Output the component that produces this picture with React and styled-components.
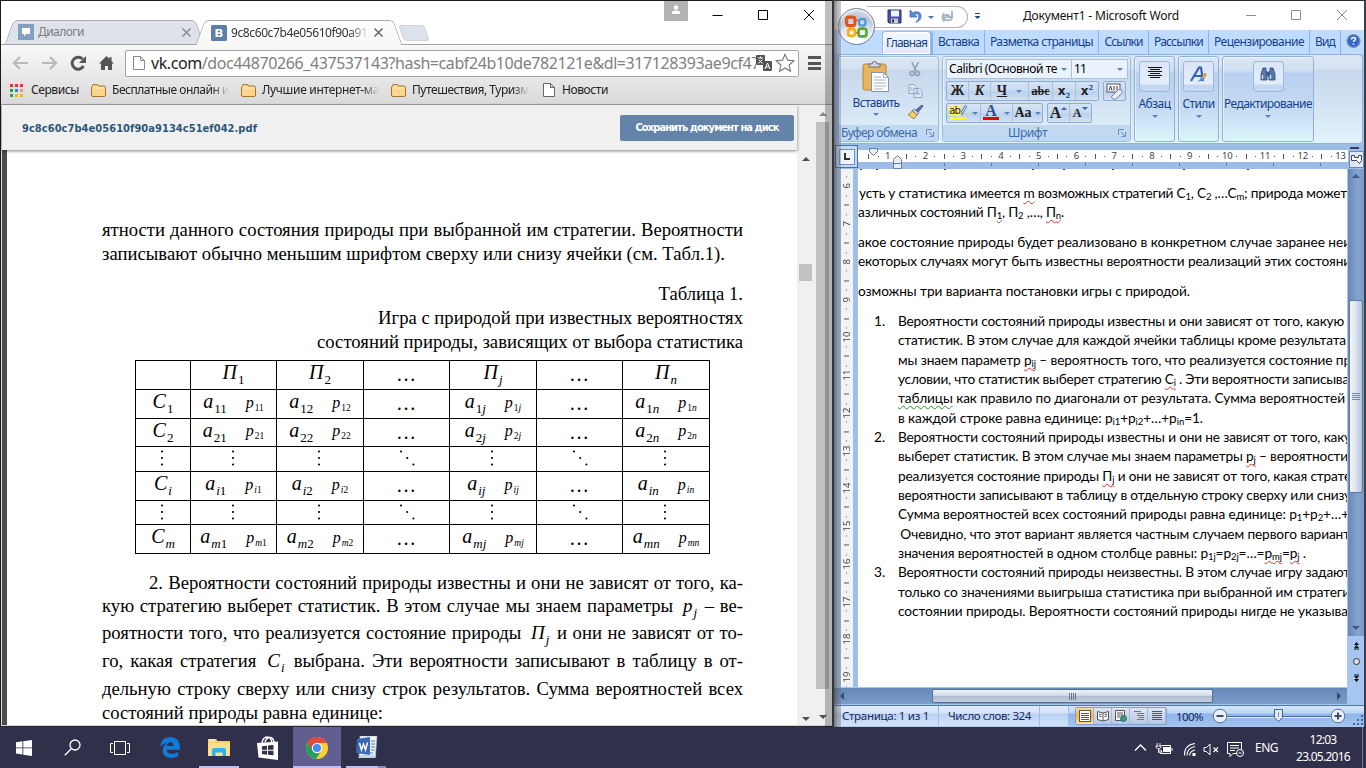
import React, { useLayoutEffect, useRef, useState } from 'react';
import styled, { createGlobalStyle, css } from 'styled-components';

const UI = '"Noto Sans", "Open Sans", sans-serif';

const Global = createGlobalStyle`
  * { box-sizing: border-box; }
  body { margin: 0; background: #31304b; overflow: hidden; }
  svg { display: block; flex: none; }
`;

/* Text spread over a given width by letter spacing */
const FitSpan = styled.span`
  display: inline-block;
  flex: none;
  white-space: pre;
`;
function Fit({ w, children }) {
  const ref = useRef(null);
  const [spacing, setSpacing] = useState(null);
  useLayoutEffect(() => {
    const el = ref.current;
    setSpacing((w - el.getBoundingClientRect().width) / el.textContent.length);
  }, [w]);
  return (
    <FitSpan ref={ref} style={spacing === null ? undefined : { letterSpacing: `${spacing}px` }}>
      {children}
    </FitSpan>
  );
}

const Screen = styled.div`
  width: 1366px;
  height: 768px;
  display: flex;
  flex-direction: column;
  font-family: ${UI};
  overflow: hidden;
`;
const Desktop = styled.div`
  height: 727px;
  display: flex;
  position: relative;
`;
const EdgeShadow = styled.div`
  position: absolute;
  left: 825px;
  top: 0;
  width: 16px;
  height: 727px;
  z-index: 20;
  background: linear-gradient(90deg, rgba(0,0,0,.25) 7px, #333335 7px, #3a3a3c 9px, rgba(60,60,65,.62) 9px, rgba(90,90,95,.4) 13px, rgba(110,110,110,.38) 16px);
`;

/* ---------- browser ---------- */
const Browser = styled.div`
  width: 834px;
  height: 727px;
  border-top: 1px solid #1c1a1e;
  border-left: 1px solid #1c1a1e;
  border-bottom: 1px solid #2a2930;
  background: #fff;
  display: flex;
  flex-direction: column;
  position: relative;
`;
const WinButtons = styled.div`
  position: absolute;
  top: 0;
  left: 663px;
  display: flex;
  align-items: flex-start;
`;
const UserBox = styled.div`
  width: 24px;
  height: 20px;
  background: #b3b3b3;
  display: flex;
  justify-content: center;
  padding-top: 4px;
  margin-right: 20px;
`;
const TabStrip = styled.div`
  height: 43px;
  flex: none;
  display: flex;
  align-items: flex-start;
  padding: 19px 0 0 8px;
`;
const Tab = styled.div`
  width: ${p => p.$w}px;
  height: ${p => (p.$active ? 25 : 24)}px;
  position: relative;
  z-index: ${p => (p.$active ? 2 : 1)};
  display: flex;
  align-items: center;
  padding: 0 5px 0 ${p => (p.$active ? 11 : 9)}px;
  font-size: 12px;
  color: ${p => (p.$active ? '#333' : '#7b7d80')};
  &::before, &::after {
    content: '';
    position: absolute;
    top: 0;
    bottom: 0;
    z-index: -1;
    background: ${p => (p.$active ? 'linear-gradient(#fff,#f7f7f7)' : '#dde3e9')};
    border: 0 solid #a9abad;
    border-top-width: 1px;
  }
  &::before { left: 0; right: 40%; border-left-width: 1px; border-top-left-radius: 5px; transform: skewX(-20deg); }
  &::after { right: 0; left: 40%; border-right-width: 1px; border-top-right-radius: 5px; transform: skewX(20deg); }
  svg { margin-right: 4px; }
`;
const TabText = styled.div`
  width: ${p => p.$w}px;
  overflow: hidden;
  line-height: 18px;
  ${p => p.$fade && css`mask-image: linear-gradient(90deg, #000 82%, transparent 97%);`}
`;
const NewTab = styled.div`
  width: 26px;
  height: 16px;
  margin: 5px 0 0 3px;
  background: #dce2ea;
  border: 1px solid #d0d4d9;
  border-radius: 3px;
  transform: skewX(20deg);
`;
const NavArea = styled.div`
  height: 61px;
  flex: none;
  border-top: 1px solid #a3a3a3;
  border-bottom: 1px solid #a2a2a2;
  background: linear-gradient(#f8f8f8, #dadada);
`;
const NavRow = styled.div`
  height: 33px;
  display: flex;
  align-items: center;
  padding: 3px 0 0 11px;
`;
const NavIcons = styled.div`
  width: 113px;
  display: flex;
  gap: 12px;
`;
const Omnibox = styled.div`
  width: 674px;
  height: 27px;
  border: 1px solid #a6a6a6;
  border-radius: 2px;
  background: #fff;
  display: flex;
  align-items: center;
  padding-left: 7px;
  font-size: 16px;
  color: #808080;
  b { color: #222; font-weight: 400; }
`;
const Url = styled.div`
  width: 605px;
  margin-left: 6px;
  overflow: hidden;
  line-height: 24px;
`;
const OmniIcons = styled.div`
  display: flex;
  align-items: center;
  gap: 3px;
`;
const MenuIcon = styled.div`
  width: 13px;
  height: 14px;
  margin-left: 9px;
  border-top: 3px solid #555;
  border-bottom: 3px solid #555;
  display: flex;
  align-items: center;
  &::after { content: ''; width: 13px; height: 3px; background: #555; }
`;
const Bookmarks = styled.div`
  height: 24px;
  display: flex;
  align-items: center;
  padding: 0 0 0 9px;
  font-size: 12px;
  color: #222;
`;
const Bookmark = styled.div`
  width: ${p => p.$w}px;
  display: flex;
  align-items: center;
  gap: ${p => p.$gap || 6}px;
`;
const BookmarkText = styled.div`
  width: ${p => p.$w || 117}px;
  overflow: hidden;
  line-height: 20px;
  ${p => p.$fade && css`mask-image: linear-gradient(90deg, #000 86%, transparent);`}
`;
const PageRow = styled.div`
  flex: 1;
  display: flex;
  background: #f0f0f0;
  border-bottom: 1px solid #d4d4d4;
  border-left: 1px solid #ddd;
`;
const PageCol = styled.div`
  width: 813px;
  display: flex;
  flex-direction: column;
`;
const FileHeader = styled.div`
  height: 45px;
  width: 795px;
  flex: none;
  position: relative;
  z-index: 1;
  background: #f0f0f0;
  box-shadow: 0 1px 3px rgba(0,0,0,.5);
  display: flex;
  align-items: center;
  justify-content: space-between;
  padding: 1px 3px 0 20px;
  font: bold 11px "DejaVu Sans", sans-serif;
  font-stretch: condensed;
  color: #2b587a;
`;
const SaveButton = styled.div`
  width: 174px;
  height: 26px;
  border-radius: 2px;
  background: #6383a8;
  color: #fff;
  text-align: center;
  line-height: 25px;
`;
const DocRow = styled.div`
  flex: 1;
  display: flex;
`;
const Document = styled.div`
  width: 795px;
  background: #fff;
  border-left: 5px solid #4a4e52;
  padding: 68px 54px 0 95px;
  font: 18.67px "Liberation Serif", serif;
  color: #000;
`;
const SerifLine = styled.div`
  height: 24px;
  line-height: 24px;
  margin-top: ${p => p.$gap || 0}px;
  padding-left: ${p => p.$indent || 0}px;
  text-align: ${p => (p.$right ? 'right' : 'left')};
  white-space: nowrap;
  ${p => p.$full && css`text-align-last: justify; white-space: normal;`}
  & > i { padding: 0 2px 0 4px; }
`;
const MathVar = styled.i`
  font-size: ${p => p.$size || 20}px;
  white-space: nowrap;
  line-height: 0;
  sub {
    font-size: ${p => (p.$size === 16 ? 9.5 : 13)}px;
    vertical-align: ${p => (p.$size === 16 ? -3 : -5)}px;
    line-height: 0;
    margin-left: 1px;
  }
  u { font-style: normal; text-decoration: none; }
`;
const Matrix = styled.div`
  display: grid;
  width: 575px;
  margin: 6px 0 17px 33px;
  grid-template-columns: 56px 86px 87px 86px 87px 86px 87px;
  grid-template-rows: 30px 29px 28px 25px 29px 24px 29px;
`;
const Cell = styled.div`
  border: 0 solid #000;
  border-right-width: 1px;
  border-bottom-width: 1px;
  border-left-width: ${p => (p.$first ? 1 : 0)}px;
  border-top-width: ${p => (p.$top ? 1 : 0)}px;
  display: flex;
  align-items: center;
  justify-content: center;
  gap: 19px;
  padding: ${p => (p.$low ? '2px 0 0' : '0 0 2px')};
`;
const ScrollInner = styled.div`
  width: 18px;
  display: flex;
  flex-direction: column;
  align-items: center;
  padding: 7px 1px 4px 0;
`;
const Thumb = styled.div`
  width: 13px;
  height: ${p => p.$h}px;
  background: #c1c1c1;
  margin: ${p => p.$mt}px 0 auto;
`;
const ScrollOuter = styled.div`
  width: 18px;
  display: flex;
  flex-direction: column;
  padding: 7px 0 6px 1px;
`;
const Arrow = styled.span`
  width: 0;
  height: 0;
  flex: none;
  margin: ${p => p.$m || 0};
  border: ${p => p.$s || 4}px solid transparent;
  ${p => p.$dir === 'up' && css`border-bottom-color: ${p.$c || '#505050'}; border-top-width: 0;`}
  ${p => p.$dir === 'down' && css`border-top-color: ${p.$c || '#505050'}; border-bottom-width: 0;`}
  ${p => p.$dir === 'left' && css`border-right-color: ${p.$c || '#505050'}; border-left-width: 0;`}
  ${p => p.$dir === 'right' && css`border-left-color: ${p.$c || '#505050'}; border-right-width: 0;`}
`;

const FileIcon = ({ c = '#8a8a8a' }) => (
  <svg width="12" height="16" viewBox="0 0 12 16" fill="#fff" stroke={c}>
    <path d="M.5 1.500h7l4 4v9H.5zM7.500 1.500v4h4" />
  </svg>
);
const FolderIcon = () => (
  <svg width="15" height="14" viewBox="0 0 15 14">
    <path d="M1 3.500 2 1.500h4.500l1 1.500H13q1.500 0 1.500 1.500V12q0 1.500-1.500 1.500H2Q.5 13.500.500 12V4z" fill="#fbd58c" stroke="#a5742f" />
    <path d="M2 5h11" stroke="#fff0c8" />
  </svg>
);
const Cross = ({ s = 9, c = '#666', w = 1.6 }) => (
  <svg width={s} height={s} viewBox="0 0 10 10" stroke={c} strokeWidth={w}><path d="M.5.5l9 9M9.500.5l-9 9" /></svg>
);
const AppsIcon = () => {
  const colors = ['#e8382e', '#e8382e', '#e8382e', '#23a455', '#3b7de0', '#f0a31c', '#23a455', '#f7b51c', '#f7b51c'];
  return (
    <svg width="13" height="13" viewBox="0 0 13 13">
      {colors.map((c, i) => <rect key={i} x={(i % 3) * 5} y={Math.floor(i / 3) * 5} width="3" height="3" fill={c} />)}
    </svg>
  );
};
const VDots = ({ diagonal }) => (
  <svg width="16" height="16" viewBox="0 0 16 16" fill="#000">
    {[0, 1, 2].map(i => <circle key={i} cx={diagonal ? 2 + i * 6.2 : 7} cy={1.5 + i * 6.5} r="1.05" />)}
  </svg>
);

const subText = s => s.split('').map((ch, i) => (/\d/.test(ch) ? <u key={i}>{ch}</u> : ch));
const V = ({ n, s, size }) => <MathVar $size={size}>{n}<sub>{subText(s)}</sub></MathVar>;
const cols = ['1', '2', '…', 'j', '…', 'n'];
const rows = ['', '1', '2', '⋮', 'i', '⋮', 'm'];

function GameTable() {
  return (
    <Matrix>
      {rows.map((r, ri) => ['', ...cols].map((c, ci) => {
        let body = null;
        const low = r !== '⋮' && c !== '…';
        if (r === '⋮') body = <VDots diagonal={c === '…'} />;
        else if (c === '…') body = <MathVar>…</MathVar>;
        else if (ri === 0 && ci > 0) body = <V n="П" s={c} />;
        else if (ci === 0 && ri > 0) body = <V n="C" s={r} />;
        else if (ci > 0) body = <><V n="a" s={r + c} /><V n="p" s={r + c} size={16} /></>;
        return <Cell key={`${ri}-${ci}`} $first={ci === 0} $top={ri === 0} $low={low}>{body}</Cell>;
      }))}
    </Matrix>
  );
}

function BrowserWindow() {
  return (
    <Browser>
      <WinButtons>
        <UserBox>
          <svg width="10" height="10" viewBox="0 0 10 10" fill="#fff"><circle cx="5" cy="2.500" r="2.200" /><path d="M1 9V7.500Q1 5.500 5 5.500T9 7.500V9z" /></svg>
        </UserBox>
        <svg width="112" height="24" viewBox="0 0 112 24" fill="none" stroke="#000">
          <path d="M4.500 14.500h10M50.500 9.500h9v9h-9zM96 9l10 10M106 9L96 19" />
        </svg>
      </WinButtons>
      <TabStrip>
        <Tab $w={191}>
          <svg width="16" height="16" viewBox="0 0 16 16"><rect width="16" height="16" fill="#819fc0" /><path d="M4 4h8v6H8l-2 2.500V10H4z" fill="#fff" /></svg>
          <TabText $w={147}><Fit w={46}>Диалоги</Fit></TabText>
          <Cross c="#8a8a8a" />
        </Tab>
        <Tab $active $w={198}>
          <svg width="16" height="16" viewBox="0 0 16 16"><rect width="16" height="16" rx="1.500" fill="#5b7fa8" /><path fillRule="evenodd" fill="#fff" d="M4.500 4H9q2.500.1 2.500 2.200 0 1.200-1 1.700 1.400.4 1.400 1.900Q11.900 12 9.300 12H4.500zM6.800 5.600v1.700h1.600q.9-.1.900-.9t-.9-.8zM6.800 8.700v1.800h1.800q1-.1 1-.9t-1-.9z" /></svg>
          <TabText $w={143} $fade><Fit w={143}>9c8c60c7b4e05610f90a913</Fit></TabText>
          <Cross />
        </Tab>
        <NewTab />
      </TabStrip>
      <NavArea>
        <NavRow>
          <NavIcons>
            <svg width="17" height="16" viewBox="0 0 17 16" fill="none" stroke="#b9b9b9" strokeWidth="2.200"><path d="M8 2L2 8l6 6M2 8h14" /></svg>
            <svg width="17" height="16" viewBox="0 0 17 16" fill="none" stroke="#b9b9b9" strokeWidth="2.200"><path d="M9 2l6 6-6 6M15 8H1" /></svg>
            <svg width="17" height="16" viewBox="0 0 17 16"><path d="M13.500 11A6 6 0 1 1 12.500 4" fill="none" stroke="#555" strokeWidth="3" /><path d="M16 1v7H9z" fill="#555" /></svg>
            <svg width="15" height="16" viewBox="0 0 15 16" fill="#555"><path d="M7.500 1L0 8.500h2V15h4v-4h3v4h4V8.500h2l-2.500-2.500V2h-2v2z" /></svg>
          </NavIcons>
          <Omnibox>
            <FileIcon />
            <Url><Fit w={609}><b>vk.com</b>/doc44870266_437537143?hash=cabf24b10de782121e&amp;dl=317128393ae9cf47</Fit></Url>
            <OmniIcons>
              <svg width="16" height="16" viewBox="0 0 16 16">
                <rect width="9" height="10" rx="1" fill="#555" /><path d="M2 3h5M4.500 1.500V3M3 5l3.500 3.500M6.300 4.500L2.500 8.500" stroke="#fff" fill="none" />
                <rect x="7" y="6" width="9" height="10" rx="1" fill="#555" /><path d="M9 14l2.500-6 2.500 6M10 12h3" stroke="#fff" fill="none" />
              </svg>
              <svg width="20" height="20" viewBox="0 0 18 18" fill="#fff" stroke="#777"><path d="M9 1.200l2.300 5.200 5.700.6-4.300 3.800 1.300 5.700-5-3-5 3 1.300-5.700L1 7l5.700-.6z" /></svg>
            </OmniIcons>
          </Omnibox>
          <MenuIcon />
        </NavRow>
        <Bookmarks>
          <Bookmark $w={81} $gap={8}><AppsIcon /><BookmarkText $w={50}><Fit w={48}>Сервисы</Fit></BookmarkText></Bookmark>
          <Bookmark $w={150}><FolderIcon /><BookmarkText $fade><Fit w={117}>Бесплатные онлайн и</Fit></BookmarkText></Bookmark>
          <Bookmark $w={150}><FolderIcon /><BookmarkText $fade><Fit w={117}>Лучшие интернет-ма</Fit></BookmarkText></Bookmark>
          <Bookmark $w={152}><FolderIcon /><BookmarkText $fade><Fit w={117}>Путешествия, Туризм</Fit></BookmarkText></Bookmark>
          <Bookmark $w={80} $gap={7}><FileIcon c="#666" /><BookmarkText $w={50}><Fit w={46}>Новости</Fit></BookmarkText></Bookmark>
        </Bookmarks>
      </NavArea>
      <PageRow>
        <PageCol>
          <FileHeader>
            <Fit w={235}>9c8c60c7b4e05610f90a9134c51ef042.pdf</Fit>
            <SaveButton><Fit w={143}>Сохранить документ на диск</Fit></SaveButton>
          </FileHeader>
          <DocRow>
            <Document>
              <SerifLine $full>ятности данного состояния природы при выбранной им стратегии. Вероятности</SerifLine>
              <SerifLine><Fit w={623}>записывают обычно меньшим шрифтом сверху или снизу ячейки (см. Табл.1).</Fit></SerifLine>
              <SerifLine $right $gap={16}>Таблица 1.</SerifLine>
              <SerifLine $right><Fit w={365}>Игра с природой при известных вероятностях</Fit></SerifLine>
              <SerifLine $right><Fit w={426}>состояний природы, зависящих от выбора статистика</Fit></SerifLine>
              <GameTable />
              <SerifLine $full $indent={47}>2. Вероятности состояний природы известны и они не зависят от того, ка-</SerifLine>
              <SerifLine $full $gap={-1}>кую стратегию выберет статистик. В этом случае мы знаем параметры <V n="p" s="j" size={19} /> – ве-</SerifLine>
              <SerifLine $full $gap={3}>роятности того, что реализуется состояние природы <V n="П" s="j" size={19} /> и они не зависят от то-</SerifLine>
              <SerifLine $full $gap={4}>го, какая стратегия <V n="C" s="i" size={19} /> выбрана. Эти вероятности записывают в таблицу в от-</SerifLine>
              <SerifLine $full $gap={4}>дельную строку сверху или снизу строк результатов. Сумма вероятностей всех</SerifLine>
              <SerifLine><Fit w={281}>состояний природы равна единице:</Fit></SerifLine>
            </Document>
            <ScrollInner>
              <Arrow $dir="up" />
              <Thumb $h={17} $mt={103} />
              <Arrow $dir="down" />
            </ScrollInner>
          </DocRow>
        </PageCol>
        <ScrollOuter>
          <Arrow $dir="up" $c="#888" $m="0 0 0 3px" />
          <Thumb $h={567} $mt={6} />
          <Arrow $dir="down" $m="0 0 0 3px" />
        </ScrollOuter>
      </PageRow>
    </Browser>
  );
}

/* ---------- word processor ---------- */
const Word = styled.div`
  width: 532px;
  height: 727px;
  position: relative;
  border-top: 1px solid #2a2b2f;
  border-right: 2px solid #35404f;
  background: #a8c6f0;
  display: flex;
  flex-direction: column;
`;
const TitleBar = styled.div`
  height: 29px;
  flex: none;
  background: #fff;
  display: flex;
  align-items: flex-start;
  font-size: 12px;
  color: #111;
`;
const QuickBar = styled.div`
  width: 101px;
  height: 22px;
  margin: 5px 0 0 33px;
  padding-left: 20px;
  border: 1px solid #b5b5b5;
  border-left: 0;
  border-radius: 0 11px 11px 0;
  display: flex;
  align-items: center;
`;
const TitleText = styled.div`
  padding-top: 5px;
  line-height: 19px;
  margin-left: 43px;
  width: 220px;
`;
const Orb = styled.div`
  position: absolute;
  left: 4px;
  top: 7px;
  z-index: 5;
  width: 37px;
  height: 37px;
  border-radius: 50%;
  border: 1px solid #6f7f98;
  background: radial-gradient(circle at 50% 90%, #fff 10%, #dfe5ee 45%, #b9c4d4 65%, #eef1f6 100%);
  box-shadow: inset 0 0 2px 1px #fff;
  display: flex;
  align-items: center;
  justify-content: center;
`;
const RibbonTabs = styled.div`
  height: 24px;
  flex: none;
  background: #bfdbff;
  padding-left: 48px;
  display: flex;
  font-size: 12px;
  color: #15428b;
`;
const RibbonTab = styled.div`
  width: ${p => p.$w}px;
  height: 24px;
  line-height: 24px;
  border-right: 1px solid #8fb2e0;
  text-align: center;
  ${p => p.$active && css`
    height: 23px;
    margin: 1px 2px 0 0;
    line-height: 22px;
    background: linear-gradient(#f3f8fe, #dfe9f6);
    border: 1px solid #96bce8;
    border-bottom: 0;
    border-radius: 4px 4px 0 0;
    box-shadow: inset 0 0 0 1px #fff, 2px 0 0 #8db4e8;
  `}
`;
const Ribbon = styled.div`
  height: 90px;
  flex: none;
  margin: 0 1px 0 3px;
  border: 1px solid #8db2e3;
  border-radius: 4px;
  background: linear-gradient(#dce7f5 0, #d5e2f1 14px, #c7d8ed 15px, #d4e4f4 60%, #e2f3fb);
  box-shadow: 0 1px 0 #93b4d8;
  display: flex;
  gap: 3px;
  padding: 1px 0 0 0;
  color: #15428b;
  font-size: 12px;
`;
const Group = styled.div`
  width: ${p => p.$w}px;
  height: 86px;
  border: 1px solid #9dbfdb;
  border-radius: 3px;
  box-shadow: inset 1px 1px 0 rgba(255,255,255,.5);
  display: flex;
  flex-direction: column;
  ${p => p.$collapsed && css`
    align-items: center;
    padding-top: 4px;
    background: linear-gradient(#dae6f4 0, #cfdff2 14px, #b9d0ef 16px, #c4daf2 60%, #daf5fc);
    border-color: #8fb2d6;
  `}
`;
const GroupFoot = styled.div`
  height: 16px;
  margin-top: auto;
  background: #c1d9f0;
  border-radius: 0 0 3px 3px;
  color: #3e6aaa;
  line-height: 16px;
  display: flex;
  align-items: center;
  justify-content: space-between;
  padding: 0 3px 0 ${p => p.$pl}px;
`;
const IconTile = styled.div`
  width: 31px;
  height: 31px;
  border: 1px solid #9cb9df;
  border-radius: 3px;
  background: linear-gradient(#d9e6f7 0, #e4eefb 22px, #c3d8f0 23px);
  display: flex;
  justify-content: center;
  padding-top: 4px;
  margin-bottom: 3px;
`;
const ClipBody = styled.div`
  display: flex;
  padding: 4px 0 0 5px;
`;
const PasteCol = styled.div`
  width: 64px;
  display: flex;
  flex-direction: column;
  align-items: center;
  line-height: 20px;
`;
const SmallCol = styled.div`
  width: 20px;
  display: flex;
  flex-direction: column;
  align-items: center;
  gap: 6px;
  margin-left: -3px;
`;
const FontBody = styled.div`
  padding: 2px 0 0 3px;
  display: flex;
  flex-direction: column;
  gap: 2px;
`;
const FontRow = styled.div`
  height: 20px;
  display: flex;
  gap: 4px;
`;
const Combo = styled.div`
  width: ${p => p.$w}px;
  height: 20px;
  margin-right: ${p => p.$mr || 0}px;
  background: #eaf2fb;
  border: 1px solid #abc1de;
  color: #000;
  line-height: 18px;
  padding: 0 4px 0 2px;
  display: flex;
  align-items: center;
  justify-content: space-between;
`;
const Segment = styled.div`
  height: 20px;
  border: 1px solid #8fadd3;
  border-radius: 2px;
  background: linear-gradient(#d6e4f5 0, #c7d9ef 9px, #bad0eb 10px, #d0e2f5);
  display: flex;
`;
const Tool = styled.div`
  width: ${p => p.$w}px;
  height: 18px;
  display: flex;
  align-items: center;
  justify-content: center;
  gap: 3px;
  border-right: ${p => (p.$last ? 0 : 1)}px solid #a9c1df;
  color: ${p => p.$c || '#222'};
  font: ${p => p.$f || 'bold 14px "Liberation Serif", serif'};
  line-height: 18px;
  white-space: nowrap;
  sub, sup { font-size: 7px; line-height: 0; color: #2c5aa8; }
`;
const Bar = styled.div`
  display: flex;
  flex-direction: column;
  align-items: center;
  line-height: 13px;
  height: 18px;
  &::after { content: ''; width: 16px; height: 3px; background: ${p => p.$c}; }
`;
const MarkRow = styled.div`
  height: 13px;
  display: flex;
  align-items: center;
`;
const Mark = styled.span`
  background: #f8ef6b;
  color: #222;
  font: 10px/11px "DejaVu Sans", sans-serif;
  letter-spacing: -1px;
  padding-right: 1px;
`;
const RulerRow = styled.div`
  height: 25px;
  flex: none;
  background: #9dbce6;
  padding-left: 1px;
  display: flex;
  position: relative;
`;
const TabSelector = styled.div`
  width: 23px;
  height: 23px;
  border: 1px solid #3e6fc0;
  background: #c4d9f5;
  display: flex;
  align-items: center;
  justify-content: center;
  margin-top: 1px;
  &::after {
    content: '';
    width: 14px; height: 14px;
    border: 1px solid #6f8fc4;
    background: linear-gradient(#333,#333) 4px 3px/2px 7px no-repeat, linear-gradient(#333,#333) 4px 8px/6px 2px no-repeat, #eef4fd;
  }
`;
const Ruler = styled.div`
  width: 490px;
  padding-top: 6px;
`;
const RulerScale = styled.div`
  height: 12px;
  background: #fff;
  overflow: hidden;
  display: flex;
  padding-left: 6px;
  font: 9.500px/12px "Noto Sans", sans-serif;
  color: #444;
`;
const ScaleCell = styled.span`
  width: 9.45px;
  flex: none;
  display: flex;
  align-items: center;
  justify-content: center;
  white-space: nowrap;
  &::before {
    content: '';
    width: ${p => (p.$k === 'n' ? 0 : 1)}px;
    height: ${p => (p.$k === 'tick' ? 5 : 1)}px;
    background: #555;
  }
`;
const TabStops = styled.div`
  height: 6px;
  display: flex;
  gap: 46px;
  padding: 1px 0 0 86px;
  overflow: hidden;
  span { width: 1px; height: 3px; background: #60748f; flex: none; }
`;
const IndentMark = styled.svg`
  position: absolute;
  left: ${p => p.$x}px;
  top: ${p => p.$y}px;
`;
const RulerCorner = styled.div`
  width: 15px;
  height: 17px;
  margin: 7px 0 0 1px;
  border: 1px solid #6e87ae;
  background: #dfe7f2;
  display: flex;
  align-items: center;
  justify-content: center;
`;
const SplitMark = styled.div`
  position: absolute;
  right: 5px;
  top: 3px;
  width: 9px;
  height: 2px;
  background: #34425c;
`;
const Body = styled.div`
  height: 518px;
  flex: none;
  display: flex;
  padding-left: 6px;
`;
const SideRuler = styled.div`
  width: 13px;
  background: #f2f3f4;
  border-left: 1px solid #c8c8c8;
  display: flex;
  flex-direction: column;
  padding-top: 3px;
  overflow: hidden;
  font: 9.500px/12px "Noto Sans", sans-serif;
  color: #444;
`;
const SideCell = styled.span`
  height: 9.44px;
  flex: none;
  display: flex;
  align-items: center;
  justify-content: center;
  writing-mode: vertical-rl;
  transform: rotate(180deg);
  white-space: nowrap;
  &::before {
    content: '';
    height: ${p => (p.$k === 'n' ? 0 : 1)}px;
    width: ${p => (p.$k === 'tick' ? 5 : 1)}px;
    background: #555;
  }
`;
const Paper = styled.div`
  width: 495px;
  border-left: 5px solid #a0bee9;
  background: #fff;
  overflow: hidden;
  font: 13.700px "Lato", "Open Sans", sans-serif;
  color: #000;
`;
const Remnants = styled.svg`
  height: 2px;
`;
const PLine = styled.div`
  height: ${p => p.$h || 19.37}px;
  line-height: 19.37px;
  white-space: nowrap;
  display: flex;
  padding-left: ${p => p.$pl || 0}px;
  sub { font-size: 9.500px; line-height: 0; vertical-align: -2px; }
`;
const ListNo = styled.span`
  width: 40px;
  padding-left: 16px;
  flex: none;
`;
const Wavy = styled.span`
  text-decoration: underline wavy ${p => p.$c || '#e03030'} 1px;
  text-underline-offset: 2px;
  text-decoration-skip-ink: none;
`;
const VScroll = styled.div`
  width: 16px;
  margin-left: 1px;
  display: flex;
  flex-direction: column;
`;
const VTrack = styled.div`
  height: 467px;
  background: linear-gradient(90deg, #6688b6, #84a3cd 60%, #7b9bc7);
  display: flex;
  flex-direction: column;
  align-items: center;
  padding: 5px 0 6px;
  justify-content: space-between;
`;
const VThumb = styled.div`
  width: 14px;
  height: 193px;
  margin-top: -12px;
  border: 1px solid #6079a2;
  border-radius: 2px;
  background: linear-gradient(90deg, #f3f6fa, #dde4ee 50%, #b4c0d4);
  display: flex;
  flex-direction: column;
  align-items: center;
  justify-content: center;
  gap: 1px;
  span { width: 8px; height: 1px; background: #7a8699; }
`;
const BrowseButtons = styled.div`
  height: 51px;
  background: #a6c5f1;
  display: flex;
  align-items: center;
  justify-content: center;
`;
const HScrollRow = styled.div`
  height: 18px;
  flex: none;
  display: flex;
  background: #a6c5f1;
  border-top: 1px solid #a6c5f1;
`;
const HTrack = styled.div`
  width: 513px;
  height: 16px;
  background: linear-gradient(#6488b8, #7c9cc8);
  display: flex;
  align-items: center;
  justify-content: space-between;
  padding: 0 6px 0 6px;
`;
const HThumb = styled.div`
  width: 281px;
  height: 14px;
  margin-left: -36px;
  border: 1px solid #56709c;
  border-radius: 2px;
  background: linear-gradient(#eef2f7, #d4dce8 45%, #afbdd1 50%, #c4cfdf);
  display: flex;
  align-items: center;
  justify-content: center;
  gap: 1px;
  span { width: 1px; height: 7px; background: #6a7486; }
`;
const StatusBar = styled.div`
  height: 21px;
  flex: none;
  border-top: 1px solid #4d77b2;
  background: linear-gradient(#d5e6fb 0, #bdd7f8 7px, #8fb5ea 8px, #a2c3f0);
  display: flex;
  align-items: center;
  font-size: 11.500px;
  color: #15285c;
`;
const StatusCell = styled.div`
  width: ${p => p.$w}px;
  height: 20px;
  line-height: 19px;
  padding-left: ${p => p.$pl || 0}px;
  background: linear-gradient(#e3edfa 0, #d4e4f8 7px, #b9d2f3 8px, #d3e4fa);
  border-right: 1px solid #9dbce8;
`;
const Views = styled.div`
  width: 92px;
  height: 18px;
  margin-left: 6px;
  border: 1px solid #7f9fd0;
  border-radius: 2px;
  background: linear-gradient(#dde6f2, #b5c9e4);
  display: flex;
`;
const View = styled.div`
  width: 18px;
  height: 16px;
  display: flex;
  align-items: center;
  justify-content: center;
  border-right: 1px solid #a5b8d4;
  background: ${p => (p.$on ? 'linear-gradient(#f9d9a0,#fbb03f 50%,#fde48c)' : 'none')};
`;
const Zoom = styled.div`
  margin-left: 9px;
  width: 36px;
`;

const Caret = ({ c = '#5b82ba', m }) => <Arrow $dir="down" $s={3} $c={c} $m={m} />;
const Launcher = () => (
  <svg width="9" height="9" viewBox="0 0 9 9" fill="none" stroke="#6a8fc0"><path d="M.5 6V.5H6M3 3l4 4M7.500 3v4.500H3" /></svg>
);
const Logo4 = () => (
  <svg width="25" height="25" viewBox="0 0 24 24" fill="none" strokeWidth="3">
    <rect x="2.500" y="3" width="8" height="8" rx="2" stroke="#e0561a" />
    <rect x="14.500" y="5" width="6" height="6" rx="2" stroke="#4a9be0" strokeWidth="2.200" />
    <rect x="4" y="14.500" width="6.500" height="6.500" rx="2" stroke="#f5b01c" strokeWidth="2.600" />
    <rect x="14" y="14" width="7.500" height="7.500" rx="2" stroke="#5aa83a" strokeWidth="2.600" />
    <path d="M11 6h3M6 12v1.500M18 12v1.500M11.500 18h2" stroke="#cf6a3a" strokeWidth="1.500" />
  </svg>
);

const TABS = [['Вставка', 52, 41], ['Разметка страницы', 114, 103], ['Ссылки', 50, 38], ['Рассылки', 60, 49], ['Рецензирование', 101, 90], ['Вид', 31, 20]];
const HCELLS = ['|', '·'];
for (let n = 1; n <= 13; n++) HCELLS.push(String(n), '·', '|', '·');
const VCELLS = ['·'];
for (let n = 6; n <= 19; n++) VCELLS.push(String(n), '·', '|', '·');
const kind = c => (c === '|' ? 'tick' : c === '·' ? 'dot' : 'n');

function RibbonArea() {
  return (
    <Ribbon>
      <Group $w={101}>
        <ClipBody>
          <PasteCol>
            <svg width="28" height="32" viewBox="0 0 28 32">
              <rect x="1" y="3" width="23" height="26" rx="2" fill="#e9b45c" stroke="#b58338" />
              <path d="M7 6V3h3q0-2.500 2.500-2.500T15 3h3v3z" fill="#d6d9df" stroke="#6c727c" />
              <path d="M9.500 11.500h12l5 5v14h-17z" fill="#fff" stroke="#7f93b2" />
              <path d="M21.500 11.500v5h5M12 16h7M12 19h12M12 22h12M12 25h12M12 28h9" stroke="#a4b4ca" fill="none" />
            </svg>
            <Fit w={47}>Вставить</Fit>
            <Caret />
          </PasteCol>
          <SmallCol>
            <svg width="12" height="16" viewBox="0 0 12 16" fill="none" stroke="#8c9db8" strokeWidth="1.500"><path d="M3 1l4 9M9.500 1L5 10" /><circle cx="3" cy="12.500" r="2" /><circle cx="8.500" cy="12.500" r="2" /></svg>
            <svg width="15" height="15" viewBox="0 0 15 15" fill="#dfe7f3" stroke="#8fa5c6"><path d="M1 1.500h5l3 3v6H1zM6 5.500h5l3 3v6H6z" /><path d="M8 9h3M8 11h4M2.500 5h2M2.500 7h2" /></svg>
            <svg width="17" height="16" viewBox="0 0 17 16"><path d="M15 1l1 1-5 6-2-2z" fill="#6478a8" stroke="#3f5180" /><path d="M7 5l5 4-2 2-5-4z" fill="#c9d3e4" stroke="#6b7c99" /><path d="M5 7l5 4-3 4-6-4.500Q4 10 5 7z" fill="#f3d071" stroke="#a8842e" /></svg>
          </SmallCol>
        </ClipBody>
        <GroupFoot $pl={2}><Fit w={76}>Буфер обмена</Fit><Launcher /></GroupFoot>
      </Group>
      <Group $w={189}>
        <FontBody>
          <FontRow>
            <Combo $w={126} $mr={-5}><Fit w={108}>Calibri (Основной те</Fit><Caret /></Combo>
            <Combo $w={57}><Fit w={12}>11</Fit><Caret /></Combo>
          </FontRow>
          <FontRow>
            <Segment>
              <Tool $w={22}>Ж</Tool><Tool $w={22}><i>К</i></Tool><Tool $w={38}><u>Ч</u><Caret m="0 0 0 6px" /></Tool>
              <Tool $w={24} $f={'bold 12px "Liberation Serif", serif'}><s>abc</s></Tool>
              <Tool $w={23} $f={'bold 12px "DejaVu Sans", sans-serif'}><span>x<sub>2</sub></span></Tool>
              <Tool $last $w={22} $f={'bold 12px "DejaVu Sans", sans-serif'}><span>x<sup>2</sup></span></Tool>
            </Segment>
            <Segment>
              <Tool $last $w={21}>
                <svg width="18" height="17" viewBox="0 0 18 17"><rect x="1" y="1" width="13" height="8" fill="#fff" stroke="#556" /><path d="M3 7.500L4.500 3 6 7.500M8 3v4.500M11 3v4.500" stroke="#333" fill="none" /><path d="M6 13l6-6q2-1.500 3.500 0t0 3.500l-5 5q-2 1.500-4 0t-.5-2.500z" fill="#e8ebf2" stroke="#7382a0" /></svg>
              </Tool>
            </Segment>
          </FontRow>
          <FontRow>
            <Segment>
              <Tool $w={34}>
                <Bar $c="#ffff00"><MarkRow><Mark>ab</Mark><svg width="6" height="11" viewBox="0 0 6 11"><path d="M4.500 0l1.500 1.500L2 8 .5 10 0 7z" fill="#c4d2ea" stroke="#44639c" strokeWidth=".8" /></svg></MarkRow></Bar>
                <Caret m="0 0 0 2px" />
              </Tool>
              <Tool $w={32} $c="#2d4f94" $f={'bold 16px "Liberation Serif", serif'}><Bar $c="#f00000">A</Bar><Caret m="0 0 0 2px" /></Tool>
              <Tool $last $w={29} $f={'bold 14px "Liberation Serif", serif'}>Aa<Caret /></Tool>
            </Segment>
            <Segment>
              <Tool $w={22} $f={'bold 16px "Liberation Serif", serif'}>A<Arrow $dir="up" $s={3} $c="#3a66a8" $m="0 0 10px -3px" /></Tool>
              <Tool $last $w={21} $f={'bold 12px "Liberation Serif", serif'}>A<Arrow $dir="down" $s={3} $c="#3a66a8" $m="0 0 10px -2px" /></Tool>
            </Segment>
          </FontRow>
        </FontBody>
        <GroupFoot $pl={65}><Fit w={39}>Шрифт</Fit><Launcher /></GroupFoot>
      </Group>
      <Group $collapsed $w={41}>
        <IconTile><svg width="14" height="13" viewBox="0 0 14 13" stroke="#111"><path d="M0 1.500h14M2 3.500h10M0 5.500h14M2 7.500h10M0 9.500h14M2 11.500h10" /></svg></IconTile>
        <Fit w={32}>Абзац</Fit><Caret m="3px 0 0" />
      </Group>
      <Group $collapsed $w={41}>
        <IconTile><svg width="17" height="17" viewBox="0 0 17 17"><path d="M1 15L9 1.500h2L13 15M4 10h8" fill="none" stroke="#3561b0" strokeWidth="2.200" /><path d="M15 7l1.500 2-3 4-2-1.500z" fill="#e5b34a" stroke="#9a7430" strokeWidth=".6" /><path d="M11 11l3 2q-2 3-7 2.500 3-1 4-4.500z" fill="#5f92da" /></svg></IconTile>
        <Fit w={32}>Стили</Fit><Caret m="3px 0 0" />
      </Group>
      <Group $collapsed $w={92}>
        <IconTile><svg width="16" height="16" viewBox="0 0 16 16" fill="#5877ad" stroke="#2e4a80" strokeWidth=".8"><path d="M3 2h3v3l1 1v8H1V8zM13 2h-3v3L9 6v8h6V8z" /><path d="M7 6h2v4H7z" /><path d="M2.500 9v4M10.500 9v4" stroke="#dbe6f7" strokeWidth="1.300" /></svg></IconTile>
        <Fit w={88}>Редактирование</Fit><Caret m="3px 0 0" />
      </Group>
    </Ribbon>
  );
}

function WordWindow() {
  return (
    <Word>
      <Orb><Logo4 /></Orb>
      <TitleBar>
        <QuickBar>
          <svg width="70" height="18" viewBox="0 0 70 18">
            <path d="M1 2h13v13H2L1 14z" fill="#4550a8" stroke="#2a2f70" /><rect x="4" y="2.500" width="8" height="6" fill="#f3f5fb" /><rect x="4" y="10.500" width="7" height="4.500" fill="#c7ccd9" /><rect x="5" y="11.500" width="2" height="3" fill="#333" />
            <path d="M23 2v7h7l-2.300-2.500q3-2 4 1T29 14.500q6-3 5-7.500-1.500-5-8.500-2.500z" fill="#5d8bd8" stroke="#3c64ad" strokeWidth=".7" />
            <path d="M41 8h6l-3 3z" fill="#4a74b8" />
            <path d="M65 3v6h-5l1.500-1.800q-4-1-4.500 2 0 3 4 3t4-3" fill="none" stroke="#a8b6cc" strokeWidth="2" />
            <path d="M57 5q-3 5 .5 8.500" fill="none" stroke="#a8b6cc" strokeWidth="2" />
          </svg>
        </QuickBar>
        <svg width="12" height="28" viewBox="0 0 12 28"><path d="M7 12.500h5" stroke="#234a8a" /><path d="M6.500 15h6l-3 3z" fill="#234a8a" /></svg>
        <TitleText><Fit w={156}>Документ1 - Microsoft Word</Fit></TitleText>
        <svg width="106" height="24" viewBox="0 0 106 24" fill="none" stroke="#8b8b8b"><path d="M3 14.500h10M48.500 9.500h9v9h-9zM94 9l10 10M104 9L94 19" /></svg>
      </TitleBar>
      <RibbonTabs>
        <RibbonTab $active $w={49}><Fit w={41}>Главная</Fit></RibbonTab>
        {TABS.map(([t, w, f]) => <RibbonTab key={t} $w={w}><Fit w={f}>{t}</Fit></RibbonTab>)}
        <svg width="22" height="22" viewBox="0 0 22 22"><circle cx="12.500" cy="11" r="6.500" fill="#2f66d0" stroke="#8794ad" strokeWidth="1.200" /><path d="M10.500 9.500q0-2 2-2t2 1.600q0 1-1.200 1.600-.8.400-.8 1.400M12.500 13.500v1.400" stroke="#fff" strokeWidth="1.500" fill="none" /></svg>
      </RibbonTabs>
      <RibbonArea />
      <RulerRow>
        <TabSelector />
        <Ruler>
          <RulerScale>{HCELLS.map((c, i) => <ScaleCell key={i} $k={kind(c)}>{kind(c) === 'n' ? c : ''}</ScaleCell>)}</RulerScale>
          <TabStops>{Array.from({ length: 9 }, (_, i) => <span key={i} />)}</TabStops>
        </Ruler>
        <SplitMark />
        <RulerCorner><svg width="13" height="13" viewBox="0 0 13 13" fill="#fff" stroke="#444"><path d="M1.500 2.500h3v2h4v-2h3v5l-2 3-3-3h-5z" /></svg></RulerCorner>
        <IndentMark $x={35} $y={4} width="9" height="8" viewBox="0 0 9 8" fill="#e6edf7" stroke="#6a7f9f"><path d="M.5.5h8v3l-4 4-4-4z" /></IndentMark>
        <IndentMark $x={59} $y={11} width="9" height="14" viewBox="0 0 9 14" fill="#e6edf7" stroke="#6a7f9f"><path d="M.5 13.500v-9l4-4 4 4v9zM.5 8.500h8" /></IndentMark>
      </RulerRow>
      <Body>
        <SideRuler>{VCELLS.map((c, i) => <SideCell key={i} $k={kind(c)}>{kind(c) === 'n' ? c : ''}</SideCell>)}</SideRuler>
        <Paper>
          <Remnants width="489" height="2" viewBox="0 0 489 2" fill="#444">
            {[2, 18, 86, 174, 205, 254, 325, 389].map(x => <rect key={x} x={x} width="2" height="1" />)}
          </Remnants>
          <PLine $h={12} />
          <PLine $pl={1}><Fit w={488}>усть у статистика имеется <Wavy>m</Wavy> возможных стратегий С<sub>1</sub>, С<sub>2</sub> ,…С<sub>m</sub>; природа может</Fit></PLine>
          <PLine $h={29.700}><Fit w={206}>азличных состояний П<Wavy $c="#2e8b2e"><sub>1</sub></Wavy>, П<sub>2</sub> ,…, <Wavy>П<sub>n</sub></Wavy>.</Fit></PLine>
          <PLine><Fit w={493}>акое состояние природы будет реализовано в конкретном случае заранее неи</Fit></PLine>
          <PLine $h={29.700}><Fit w={493}>екоторых случаях могут быть известны вероятности реализаций этих состояни</Fit></PLine>
          <PLine $h={29.700}><Fit w={332}>озможны три варианта постановки игры с природой.</Fit></PLine>
          <PLine><ListNo>1.</ListNo><Fit w={446}>Вероятности состояний природы известны и они зависят от того, какую</Fit></PLine>
          <PLine $pl={40}><Fit w={448}>статистик. В этом случае для каждой ячейки таблицы кроме результата</Fit></PLine>
          <PLine $pl={40}><Fit w={453}>мы знаем параметр <Wavy>p<sub>ij</sub></Wavy> – вероятность того, что реализуется состояние пр</Fit></PLine>
          <PLine $pl={40}><Fit w={451}>условии, что статистик выберет стратегию <Wavy>С<sub>i</sub></Wavy> . Эти вероятности записыва</Fit></PLine>
          <PLine $pl={40}><Fit w={447}><Wavy $c="#2e8b2e">таблицы</Wavy> как правило по диагонали от результата. Сумма вероятностей</Fit></PLine>
          <PLine $pl={40}><Fit w={305}>в каждой строке равна единице: p<sub>i1</sub>+p<sub>i2</sub>+…+p<sub>in</sub>=1.</Fit></PLine>
          <PLine><ListNo>2.</ListNo><Fit w={453}>Вероятности состояний природы известны и они не зависят от того, каку</Fit></PLine>
          <PLine $pl={40}><Fit w={450}>выберет статистик. В этом случае мы знаем параметры <Wavy>p<sub>j</sub></Wavy> – вероятности</Fit></PLine>
          <PLine $pl={40}><Fit w={453}>реализуется состояние природы <Wavy>П<sub>j</sub></Wavy> и они не зависят от того, какая страте</Fit></PLine>
          <PLine $pl={40}><Fit w={453}>вероятности записывают в таблицу в отдельную строку сверху или снизу</Fit></PLine>
          <PLine $pl={40}><Fit w={451}>Сумма вероятностей всех состояний природы равна единице: p<sub>1</sub>+p<sub>2</sub>+…+</Fit></PLine>
          <PLine $pl={39}><Fit w={453}> Очевидно, что этот вариант является частным случаем первого вариант</Fit></PLine>
          <PLine $pl={40}><Fit w={408}>значения вероятностей в одном столбце равны: p<sub>1j</sub>=p<sub>2j</sub>=…=<Wavy>p<sub>mj</sub></Wavy>=<Wavy>p<sub>j</sub></Wavy> .</Fit></PLine>
          <PLine><ListNo>3.</ListNo><Fit w={452}>Вероятности состояний природы неизвестны. В этом случае игру задают</Fit></PLine>
          <PLine $pl={40}><Fit w={452}>только со значениями выигрыша статистика при выбранной им стратеги</Fit></PLine>
          <PLine $pl={40}><Fit w={450}>состоянии природы. Вероятности состояний природы нигде не указыва</Fit></PLine>
        </Paper>
        <VScroll>
          <VTrack>
            <Arrow $dir="up" $c="#405a86" $s={4} />
            <VThumb><span /><span /><span /><span /></VThumb>
            <Arrow $dir="down" $c="#405a86" $s={4} />
          </VTrack>
          <BrowseButtons>
            <svg width="9" height="42" viewBox="0 0 9 42" fill="#111"><path d="M2 4l2.500-3L7 4zM2 7l2.500-3L7 7zM2 7.500h5v1H2zM2 33.500h5v1H2zM2 35h5l-2.500 3zM2 38h5l-2.500 3z" /><circle cx="4.500" cy="20.500" r="3" fill="#ddd" stroke="#333" /></svg>
          </BrowseButtons>
        </VScroll>
      </Body>
      <HScrollRow>
        <HTrack>
          <Arrow $dir="left" $c="#2f4a78" />
          <HThumb><span /><span /><span /><span /></HThumb>
          <Arrow $dir="right" $c="#2f4a78" />
        </HTrack>
      </HScrollRow>
      <StatusBar>
        <StatusCell $w={105} $pl={8}><Fit w={87}>Страница: 1 из 1</Fit></StatusCell>
        <StatusCell $w={101} $pl={9}><Fit w={83}>Число слов: 324</Fit></StatusCell>
        <StatusCell $w={29} />
        <Views>
          <View $on><svg width="12" height="12" viewBox="0 0 12 12"><rect x=".5" y=".5" width="11" height="11" fill="#fff" stroke="#665a3c" /><path d="M2 3.500h8M2 5.500h8M2 7.500h8M2 9.500h8" stroke="#665a3c" /></svg></View>
          <View><svg width="12" height="12" viewBox="0 0 12 12" fill="#fff" stroke="#555"><path d="M.5 1.500L6 3l5.500-1.500v8L6 11 .5 9.500zM6 3v8M2 4l2.500.5M2 6l2.500.5M7.500 4.500L10 4M7.500 6.500L10 6" /></svg></View>
          <View><svg width="12" height="12" viewBox="0 0 12 12"><path d="M.5.5h9v10h-9z" fill="#fff" stroke="#555" /><path d="M2 3h6M2 5h6M2 7h3" stroke="#555" /><circle cx="8.500" cy="8.500" r="3" fill="#3f9a55" stroke="#2a6698" /></svg></View>
          <View><svg width="12" height="12" viewBox="0 0 12 12" stroke="#777"><path d="M1 1.500h7M4 3.500h7M4 5.500h7M6 7.500h5M4 9.500h7" /></svg></View>
          <View><svg width="12" height="12" viewBox="0 0 12 12" stroke="#555"><path d="M1 1.500h10M1 3.500h10M1 5.500h10M1 7.500h10M1 9.500h10" /></svg></View>
        </Views>
        <Zoom><Fit w={27}>100%</Fit></Zoom>
        <svg width="152" height="20" viewBox="0 0 152 20" fill="none">
          <path d="M14 10.500h106" stroke="#4a6a9c" /><path d="M14 11.500h106" stroke="#e4effc" />
          <circle cx="8" cy="10" r="6.800" fill="#e9eff7" stroke="#5b7399" /><circle cx="126" cy="10" r="6.800" fill="#e9eff7" stroke="#5b7399" />
          <path d="M4.500 10h7M122.500 10h7M126 6.500v7" stroke="#3d4d66" strokeWidth="2" />
          <path d="M62.500 3.500h8v8l-4 4-4-4z" fill="#dfe8f4" stroke="#48618c" /><path d="M66.500 6v5" stroke="#7d92b4" />
          <path d="M149 9h2v2h-2zM145 13h2v2h-2zM149 13h2v2h-2zM141 17h2v2h-2zM145 17h2v2h-2zM149 17h2v2h-2z" fill="#41689f" />
        </svg>
      </StatusBar>
    </Word>
  );
}

/* ---------- taskbar ---------- */
const Taskbar = styled.div`
  height: 41px;
  background: #31304b;
  display: flex;
  color: #fff;
`;
const TaskButton = styled.div`
  width: ${p => p.$w || 48}px;
  height: 41px;
  margin-right: ${p => p.$mr || 0}px;
  padding-top: 2px;
  display: flex;
  align-items: center;
  justify-content: center;
  background: ${p => (p.$active ? '#615f8f' : 'none')};
  border-bottom: 2px solid transparent;
  border-image: ${p => p.$line ? `linear-gradient(90deg, ${p.$line}) 1` : 'none'};
`;
const Tray = styled.div`
  margin-left: auto;
  display: flex;
  align-items: center;
  font-size: 12px;
`;
const Lang = styled.div`
  width: 45px;
  padding-left: 7px;
`;
const Clock = styled.div`
  width: 60px;
  text-align: center;
  line-height: 17px;
  margin-right: 9px;
`;
const ShowDesktop = styled.div`
  width: 4px;
  height: 41px;
  border-left: 1px solid #7a7990;
`;

function TaskbarArea() {
  return (
    <Taskbar>
      <TaskButton>
        <svg width="16" height="16" viewBox="0 0 16 16" fill="#fff"><path d="M0 2.200l6.500-.9v6.200H0zM7.300 1.200L16 0v7.500H7.300zM0 8.300h6.500v6.200L0 13.600zM7.300 8.300H16V16l-8.700-1.300z" /></svg>
      </TaskButton>
      <TaskButton>
        <svg width="17" height="17" viewBox="0 0 17 17" fill="none" stroke="#fff" strokeWidth="1.300"><circle cx="11" cy="6" r="5" /><path d="M7.500 9.500L.8 16.200" /></svg>
      </TaskButton>
      <TaskButton $mr={2}>
        <svg width="20" height="16" viewBox="0 0 20 16" fill="none" stroke="#fff"><path d="M4.500 1.500h11v13h-11zM3 3.500H.5v9H3M17 3.500h2.500v9H17" /></svg>
      </TaskButton>
      <TaskButton $mr={5}>
        <svg width="20" height="21" viewBox="0 0 20 21" fill="#0f7ad8"><path d="M0 9.500Q1 .3 10.300 0 19.700.4 20 10.500v2.200H6.700q.4 3.900 5.300 4 3.500 0 6.300-1.700v4.300Q15 21 11 21 3 20.600 2.500 13.500 2.600 8.500 7.300 6.200 3 6.300 0 9.500zM6.800 9h7q-.1-3.600-3.400-3.700Q7.300 5.500 6.800 9z" /></svg>
      </TaskButton>
      <TaskButton $w={40} $mr={4} $line="#c3bcf0, #c3bcf0">
        <svg width="22" height="19" viewBox="0 0 22 19"><path d="M0 1h8l1.500 2H22v15H0z" fill="#f6cf62" /><path d="M1 1.500h6v2H1z" fill="#fff3c4" /><path d="M0 5h22v13H0z" fill="#fbe08b" /><path d="M4 18v-6q0-2 2-2h10q2 0 2 2v6h-3.500v-3.500h-7V18z" fill="#2fb4ea" /></svg>
      </TaskButton>
      <TaskButton $w={49} $mr={1}>
        <svg width="22" height="24" viewBox="0 0 22 24"><path d="M5 7Q6 1 10 1t5 6M8 6q1-4 4.500-4.500T17 6" fill="none" stroke="#fff" strokeWidth="1.400" /><path d="M0 7l21-1.500V24L1.500 21.500z" fill="#fff" /><path d="M5 10.200l5-.5v4H5zM11 9.600l5.500-.5v4.600H11zM5 14.700h5v4l-5-.6zM11 14.700h5.500v4.600l-5.500-.6z" fill="#31304b" /></svg>
      </TaskButton>
      <TaskButton $active $mr={5} $line="#c3bcf0, #c3bcf0">
        <svg width="22" height="22" viewBox="0 0 22 22"><circle cx="11" cy="11" r="11" fill="#fdd032" /><path d="M1.500 5.500A11 11 0 0 1 20.600 5.700L11 6z" fill="#dd4b3e" /><path d="M1.500 5.500L6 13.500 11 11V5.800L20.600 5.700A11 11 0 0 0 1.500 5.500z" fill="#dd4b3e" /><path d="M1.500 5.500A11 11 0 0 0 10 21.950L15.500 13.500 11 15.500 6.500 13.500z" fill="#1fa15d" /><circle cx="11" cy="11" r="5.200" fill="#fff" /><circle cx="11" cy="11" r="4.100" fill="#4a8af4" /></svg>
      </TaskButton>
      <TaskButton $w={40} $line="#c3bcf0 78%, #8f8ab8 78%">
        <svg width="23" height="23" viewBox="0 0 23 23"><path d="M5 0h17l-1.500 20H4z" fill="#eef3fb" stroke="#9db3d6" strokeWidth=".6" /><path d="M5 19h16l-.5 3H3z" fill="#c7d5ea" /><path d="M2 3l13-2v18L1 17z" fill="#3a66b4" /><path d="M4.500 7l2 7 2-6 2 6 2-7.500" stroke="#fff" strokeWidth="1.500" fill="none" /><path d="M16 5h4M16 8h4M16 11h4M16 14h3.500M7 17h11" stroke="#4971b5" /></svg>
      </TaskButton>
      <Tray>
        <svg width="114" height="24" viewBox="0 0 114 24" fill="none" stroke="#fff">
          <path d="M1 14.500l5.500-5.500 5.500 5.500" strokeWidth="1.300" />
          <path d="M27.500 9.500h9v8h-9v-3M26 13.500v4h1M38 12v3" /><path d="M29 11h7v5h-7z" fill="#fff" stroke="none" /><path d="M23 7v3M26 7v3M22 10h5v1.500q-2.500 3-5 0zM24.500 13v4" strokeWidth=".9" />
          <path d="M50.500 19.500Q50 9 61 7.500M53 19.500Q53 12 61 10.500M55.500 19.500Q56 15 61 14" strokeWidth="1.100" /><path d="M58.500 17h3v3h-3z" fill="#fff" stroke="none" />
          <path d="M70 11.500h2.500l3.500-3.500v11l-3.500-3.500H70z" /><path d="M79.500 11.500l4.500 4.500M84 11.500L79.500 16" strokeWidth="1.200" />
          <path d="M103 17.500h-4l-3 3v-3h-2.500v-11h14v7M96 9.500h9M96 12h9M96 14.500h5" /><circle cx="106" cy="17" r="3.500" /><path d="M104.500 17h3" />
        </svg>
        <Lang><Fit w={23}>ENG</Fit></Lang>
        <Clock><Fit w={27}>12:03</Fit><br /><Fit w={54}>23.05.2016</Fit></Clock>
        <ShowDesktop />
      </Tray>
    </Taskbar>
  );
}

export default function App() {
  return (
    <Screen>
      <Global />
      <Desktop>
        <BrowserWindow />
        <WordWindow />
        <EdgeShadow />
      </Desktop>
      <TaskbarArea />
    </Screen>
  );
}
